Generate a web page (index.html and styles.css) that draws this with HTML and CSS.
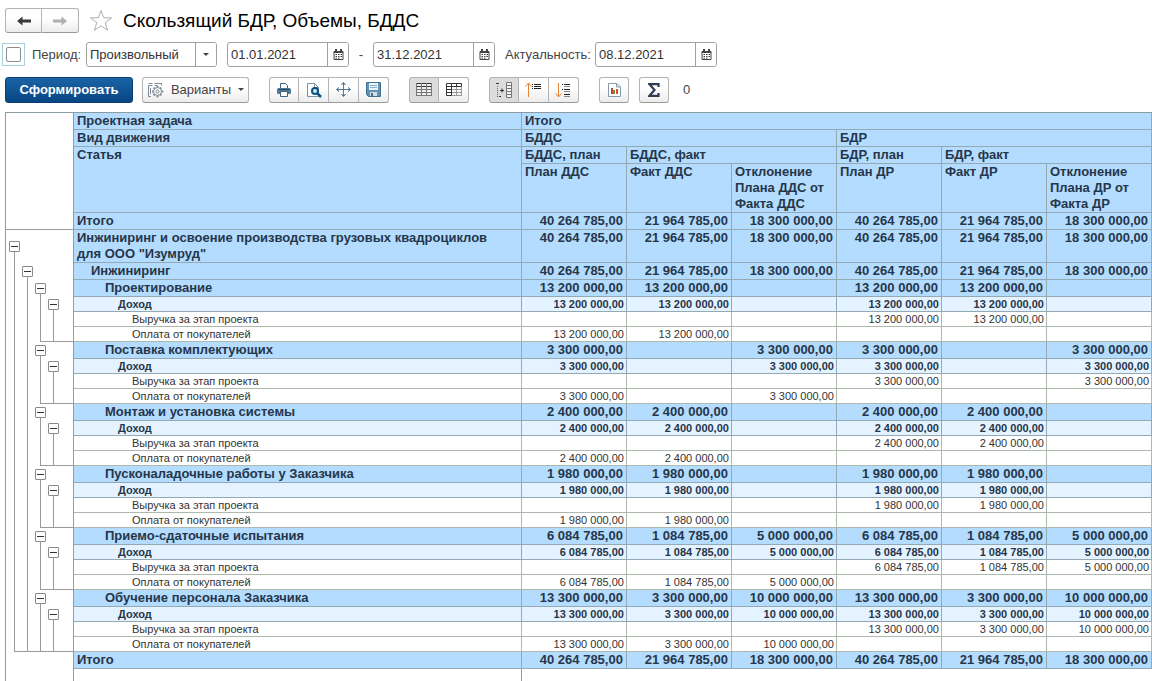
FILE: index.html
```html
<!DOCTYPE html>
<html lang="ru">
<head>
<meta charset="utf-8">
<title>Скользящий БДР, Объемы, БДДС</title>
<link rel="stylesheet" href="styles.css">
</head>
<body>
<svg class="defs" aria-hidden="true">
  <symbol id="cal" viewBox="0 0 11 12"><path d="M1 2.500h9v8H1z" fill="#fff" stroke="#444"/><path d="M1 2h9v2H1zM2 0h2v2H2zM7 0h2v2H7z" fill="#444"/><path d="M2.500 5.500h1.500M5 5.500h1.500M7.500 5.500h1.500M2.500 7.500h1.500M5 7.500h1.500M7.500 7.500h1.500M2.500 9.200h1.500M5 9.200h1.500" stroke="#444"/></symbol>
  <symbol id="down" viewBox="0 0 6 3"><path d="M0 0h6L3 3z" fill="#444"/></symbol>
</svg>
<header class="top">
  <div class="group nav">
    <button class="btn" aria-label="Назад"><svg width="16" height="10" viewBox="0 0 16 10"><path d="M1 5L6.500.500v3H15v3H6.500v3z" fill="#3a3a3a"/></svg></button>
    <button class="btn" aria-label="Вперед"><svg width="16" height="10" viewBox="0 0 16 10"><path d="M15 5L9.500.500v3H1v3h8.500v3z" fill="#b0b0b0"/></svg></button>
  </div>
  <svg class="star" width="24" height="23" viewBox="0 0 24 23"><path d="M12 1.500l2.600 7.200 8 .2-6.400 4.800 2.400 7.600L12 16.800l-6.600 4.500 2.400-7.600L1.400 8.900l8-.2z" fill="#fff" stroke="#aab0b5"/></svg>
  <h1>Скользящий БДР, Объемы, БДДС</h1>
</header>
<div class="filters">
  <label class="period"><span class="focus"><input type="checkbox" class="check"></span><span>Период:</span></label>
  <div class="field kind"><select aria-label="Вид периода"><option>Произвольный</option></select><span class="drop"><svg width="6" height="3"><use href="#down"/></svg></span></div>
  <div class="field"><input type="text" value="01.01.2021" aria-label="Начало периода"><button aria-label="Календарь"><svg width="11" height="12"><use href="#cal"/></svg></button></div>
  <span class="dash">-</span>
  <div class="field"><input type="text" value="31.12.2021" aria-label="Конец периода"><button aria-label="Календарь"><svg width="11" height="12"><use href="#cal"/></svg></button></div>
  <label class="actual" for="actual">Актуальность:</label>
  <div class="field"><input type="text" id="actual" value="08.12.2021"><button aria-label="Календарь"><svg width="11" height="12"><use href="#cal"/></svg></button></div>
</div>
<div class="toolbar">
  <button class="primary">Сформировать</button>
  <button class="btn variants"><svg width="17" height="16" viewBox="0 0 17 16"><g fill="none" stroke="#7d8a96"><path d="M4 14.500H1.500V3.500h4M1.500 1.500h4M7.500 1.500h7v2M7.500 3.500h3M3.500 6v6"/><circle cx="10.500" cy="9.500" r="4"/><circle cx="10.500" cy="9.500" r="1.500"/><path d="M10.500 4v1.500M10.500 13.500V15.500M5 9.500h1.500M14.500 9.500h1.800M6.600 5.600l1 1M13.400 12.400l1 1M6.600 13.400l1-1M13.400 6.600l1-1" stroke-width="2"/></g></svg><span>Варианты</span><svg width="6" height="3"><use href="#down"/></svg></button>
  <div class="group">
    <button class="btn" aria-label="Печать"><svg width="16" height="14" viewBox="0 0 16 14"><path d="M4.500 5V.500h5l2 2V5" fill="#fff" stroke="#44637c"/><rect x="1" y="5" width="14" height="6" rx="1.500" fill="#4f7894"/><path d="M3 6.500h10" stroke="#264a66"/><path d="M4.500 8.500h7v5h-7z" fill="#fff" stroke="#44637c"/></svg></button>
    <button class="btn" aria-label="Просмотр"><svg width="16" height="16" viewBox="0 0 16 16"><path d="M1.500 1.500h7l4 4v9h-11z" fill="#fff" stroke="#7895a8"/><path d="M8.500 1.500v4h4" fill="none" stroke="#7895a8"/><circle cx="9" cy="9" r="3" fill="#cfe6f5" stroke="#0e5280" stroke-width="2"/><path d="M11 11l4 4" stroke="#0e5280" stroke-width="2.500"/></svg></button>
    <button class="btn" aria-label="Параметры страницы"><svg width="15" height="15" viewBox="0 0 15 15"><path d="M7.500 1v13M1 7.500h13" stroke="#507b98"/><path d="M5.500 3l2-2.500 2 2.500M5.500 12l2 2.500 2-2.500M3 5.500L.500 7.500 3 9.500M12 5.500l2.500 2-2.500 2" fill="none" stroke="#356681"/></svg></button>
    <button class="btn" aria-label="Сохранить"><svg width="15" height="15" viewBox="0 0 15 15"><path d="M.500.500h14v14h-12l-2-2z" fill="#6392b5" stroke="#42708f"/><path d="M3 1h9v7H3z" fill="#e9f4fa"/><path d="M4 3.500h7M4 5.500h7" stroke="#8fb0c6"/><path d="M4 10h7v4H4z" fill="#d4e0e8"/><path d="M5 11h2v3H5z" fill="#42708f"/></svg></button>
  </div>
  <div class="group">
    <button class="btn on" aria-label="Таблица"><svg width="16" height="13" viewBox="0 0 16 13"><path d="M0 0h16v13H0z" fill="#eee"/><path d="M0 .500h16M0 3.500h16" stroke="#333"/><path d="M0 6.500h16M0 9.500h16M0 12.500h16" stroke="#777"/><path d="M.500 0v13M5.500 0v13M10.500 0v13M15.500 0v13" stroke="#777"/></svg></button>
    <button class="btn" aria-label="Заголовки"><svg width="16" height="13" viewBox="0 0 16 13"><path d="M.500.500h15v3H.500zM.500 3.500h5v9H.500z" fill="#fff" stroke="#333"/><path d="M5.500 0v4M10.500 0v4M0 6.500h5M0 9.500h5" stroke="#333"/><path d="M10.500 4v9M15.500 4v9M6 6.500h10M6 9.500h10M6 12.500h10" stroke="#999"/></svg></button>
  </div>
  <div class="group">
    <button class="btn on" aria-label="Группировки"><svg width="16" height="16" viewBox="0 0 16 16"><path d="M0 1.500h3M3 14.500h2M4 8.500h4M6 6.500v4" stroke="#333"/><path d="M1.500 4v11" stroke="#666" stroke-dasharray="1 1"/><path d="M10.500.500h5v15h-5zM11 3.500h5M11 6.500h5M11 9.500h5M11 12.500h5" fill="#f5f5f5" stroke="#777"/></svg></button>
    <button class="btn" aria-label="Свернуть"><svg width="17" height="16" viewBox="0 0 17 16"><path d="M3.500 15V2M.500 4.500l3-3.500 3 3.500" fill="none" stroke="#e0853a"/><path d="M7 2.500h1M9 2.500h7M7 4.500h1M9 4.500h7M7 6.500h1M9 6.500h7" stroke="#222"/></svg></button>
    <button class="btn" aria-label="Развернуть"><svg width="17" height="16" viewBox="0 0 17 16"><path d="M3.500 1v13M.500 11.500l3 3.500 3-3.500" fill="none" stroke="#e0853a"/><path d="M7 2.500h1M9 2.500h6M7 7.500h1M9 7.500h6M9 12.500h6" stroke="#222"/><path d="M9 4.500h6M9 9.500h6M9 14.500h6" stroke="#888"/></svg></button>
  </div>
  <button class="btn single" aria-label="Диаграмма"><svg width="13" height="14" viewBox="0 0 13 14"><path d="M.500.500h8l4 3.500v9.500H.500z" fill="#fff" stroke="#859ba9"/><path d="M8.500.500V4h4" fill="none" stroke="#859ba9"/><path d="M3 5h2v6H3z" fill="#c8452d"/><path d="M5 7h2v4H5z" fill="#5d9a43"/><path d="M8 6h2v5H8z" fill="#d0532d"/></svg></button>
  <button class="btn single" aria-label="Сумма"><svg width="12" height="14" viewBox="0 0 12 14"><path d="M10.500 4V1.200H1.500L6.500 7l-5 5.800h9V10" fill="none" stroke="#2c3e50" stroke-width="2.200"/></svg></button>
  <output class="sum">0</output>
</div>
<table class="report">
  <colgroup><col class="c-tree"><col><col class="c-num"><col class="c-num"><col class="c-num"><col class="c-num"><col class="c-num"><col class="c-num"></colgroup>
  <thead>
    <tr><td class="tree corner" rowspan="5"></td><th>Проектная задача</th><th colspan="6">Итого</th></tr>
    <tr><th>Вид движения</th><th colspan="3">БДДС</th><th colspan="3">БДР</th></tr>
    <tr><th rowspan="2">Статья</th><th>БДДС, план</th><th colspan="2">БДДС, факт</th><th>БДР, план</th><th colspan="2">БДР, факт</th></tr>
    <tr><th>План ДДС</th><th>Факт ДДС</th><th>Отклонение Плана ДДС от Факта ДДС</th><th>План ДР</th><th>Факт ДР</th><th>Отклонение Плана ДР от Факта ДР</th></tr>
    <tr class="total"><th>Итого</th><td>40 264 785,00</td><td>21 964 785,00</td><td>18 300 000,00</td><td>40 264 785,00</td><td>21 964 785,00</td><td>18 300 000,00</td></tr>
  </thead>
  <tbody>
    <tr class="l0"><td class="tree"><div><i class="t"><button aria-label="Свернуть"></button></i></div></td><th>Инжиниринг и освоение производства грузовых квадроциклов для&nbsp;ООО "Изумруд"</th><td>40 264 785,00</td><td>21 964 785,00</td><td>18 300 000,00</td><td>40 264 785,00</td><td>21 964 785,00</td><td>18 300 000,00</td></tr>
    <tr class="l1"><td class="tree"><div><i></i><i class="t"><button aria-label="Свернуть"></button></i></div></td><th>Инжиниринг</th><td>40 264 785,00</td><td>21 964 785,00</td><td>18 300 000,00</td><td>40 264 785,00</td><td>21 964 785,00</td><td>18 300 000,00</td></tr>

    <tr class="l2"><td class="tree"><div><i></i><i></i><i class="t"><button aria-label="Свернуть"></button></i></div></td><th>Проектирование</th><td>13 200 000,00</td><td>13 200 000,00</td><td></td><td>13 200 000,00</td><td>13 200 000,00</td><td></td></tr>
    <tr class="l3"><td class="tree"><div><i></i><i></i><i></i><i class="t"><button aria-label="Свернуть"></button></i></div></td><th>Доход</th><td>13 200 000,00</td><td>13 200 000,00</td><td></td><td>13 200 000,00</td><td>13 200 000,00</td><td></td></tr>
    <tr class="l4"><td class="tree"><div><i></i><i></i><i></i><i></i></div></td><th>Выручка за этап проекта</th><td></td><td></td><td></td><td>13 200 000,00</td><td>13 200 000,00</td><td></td></tr>
    <tr class="l4"><td class="tree"><div><i></i><i></i><i class="e"></i><i class="e"></i></div></td><th>Оплата от покупателей</th><td>13 200 000,00</td><td>13 200 000,00</td><td></td><td></td><td></td><td></td></tr>

    <tr class="l2"><td class="tree"><div><i></i><i></i><i class="t"><button aria-label="Свернуть"></button></i></div></td><th>Поставка комплектующих</th><td>3 300 000,00</td><td></td><td>3 300 000,00</td><td>3 300 000,00</td><td></td><td>3 300 000,00</td></tr>
    <tr class="l3"><td class="tree"><div><i></i><i></i><i></i><i class="t"><button aria-label="Свернуть"></button></i></div></td><th>Доход</th><td>3 300 000,00</td><td></td><td>3 300 000,00</td><td>3 300 000,00</td><td></td><td>3 300 000,00</td></tr>
    <tr class="l4"><td class="tree"><div><i></i><i></i><i></i><i></i></div></td><th>Выручка за этап проекта</th><td></td><td></td><td></td><td>3 300 000,00</td><td></td><td>3 300 000,00</td></tr>
    <tr class="l4"><td class="tree"><div><i></i><i></i><i class="e"></i><i class="e"></i></div></td><th>Оплата от покупателей</th><td>3 300 000,00</td><td></td><td>3 300 000,00</td><td></td><td></td><td></td></tr>

    <tr class="l2"><td class="tree"><div><i></i><i></i><i class="t"><button aria-label="Свернуть"></button></i></div></td><th>Монтаж и установка системы</th><td>2 400 000,00</td><td>2 400 000,00</td><td></td><td>2 400 000,00</td><td>2 400 000,00</td><td></td></tr>
    <tr class="l3"><td class="tree"><div><i></i><i></i><i></i><i class="t"><button aria-label="Свернуть"></button></i></div></td><th>Доход</th><td>2 400 000,00</td><td>2 400 000,00</td><td></td><td>2 400 000,00</td><td>2 400 000,00</td><td></td></tr>
    <tr class="l4"><td class="tree"><div><i></i><i></i><i></i><i></i></div></td><th>Выручка за этап проекта</th><td></td><td></td><td></td><td>2 400 000,00</td><td>2 400 000,00</td><td></td></tr>
    <tr class="l4"><td class="tree"><div><i></i><i></i><i class="e"></i><i class="e"></i></div></td><th>Оплата от покупателей</th><td>2 400 000,00</td><td>2 400 000,00</td><td></td><td></td><td></td><td></td></tr>

    <tr class="l2"><td class="tree"><div><i></i><i></i><i class="t"><button aria-label="Свернуть"></button></i></div></td><th>Пусконаладочные работы у Заказчика</th><td>1 980 000,00</td><td>1 980 000,00</td><td></td><td>1 980 000,00</td><td>1 980 000,00</td><td></td></tr>
    <tr class="l3"><td class="tree"><div><i></i><i></i><i></i><i class="t"><button aria-label="Свернуть"></button></i></div></td><th>Доход</th><td>1 980 000,00</td><td>1 980 000,00</td><td></td><td>1 980 000,00</td><td>1 980 000,00</td><td></td></tr>
    <tr class="l4"><td class="tree"><div><i></i><i></i><i></i><i></i></div></td><th>Выручка за этап проекта</th><td></td><td></td><td></td><td>1 980 000,00</td><td>1 980 000,00</td><td></td></tr>
    <tr class="l4"><td class="tree"><div><i></i><i></i><i class="e"></i><i class="e"></i></div></td><th>Оплата от покупателей</th><td>1 980 000,00</td><td>1 980 000,00</td><td></td><td></td><td></td><td></td></tr>

    <tr class="l2"><td class="tree"><div><i></i><i></i><i class="t"><button aria-label="Свернуть"></button></i></div></td><th>Приемо-сдаточные испытания</th><td>6 084 785,00</td><td>1 084 785,00</td><td>5 000 000,00</td><td>6 084 785,00</td><td>1 084 785,00</td><td>5 000 000,00</td></tr>
    <tr class="l3"><td class="tree"><div><i></i><i></i><i></i><i class="t"><button aria-label="Свернуть"></button></i></div></td><th>Доход</th><td>6 084 785,00</td><td>1 084 785,00</td><td>5 000 000,00</td><td>6 084 785,00</td><td>1 084 785,00</td><td>5 000 000,00</td></tr>
    <tr class="l4"><td class="tree"><div><i></i><i></i><i></i><i></i></div></td><th>Выручка за этап проекта</th><td></td><td></td><td></td><td>6 084 785,00</td><td>1 084 785,00</td><td>5 000 000,00</td></tr>
    <tr class="l4"><td class="tree"><div><i></i><i></i><i class="e"></i><i class="e"></i></div></td><th>Оплата от покупателей</th><td>6 084 785,00</td><td>1 084 785,00</td><td>5 000 000,00</td><td></td><td></td><td></td></tr>

    <tr class="l2"><td class="tree"><div><i></i><i></i><i class="t"><button aria-label="Свернуть"></button></i></div></td><th>Обучение персонала Заказчика</th><td>13 300 000,00</td><td>3 300 000,00</td><td>10 000 000,00</td><td>13 300 000,00</td><td>3 300 000,00</td><td>10 000 000,00</td></tr>
    <tr class="l3"><td class="tree"><div><i></i><i></i><i></i><i class="t"><button aria-label="Свернуть"></button></i></div></td><th>Доход</th><td>13 300 000,00</td><td>3 300 000,00</td><td>10 000 000,00</td><td>13 300 000,00</td><td>3 300 000,00</td><td>10 000 000,00</td></tr>
    <tr class="l4"><td class="tree"><div><i></i><i></i><i></i><i></i></div></td><th>Выручка за этап проекта</th><td></td><td></td><td></td><td>13 300 000,00</td><td>3 300 000,00</td><td>10 000 000,00</td></tr>
    <tr class="l4"><td class="tree"><div><i class="e"></i><i class="e"></i><i class="e"></i><i class="e"></i></div></td><th>Оплата от покупателей</th><td>13 300 000,00</td><td>3 300 000,00</td><td>10 000 000,00</td><td></td><td></td><td></td></tr>
  </tbody>
  <tfoot>
    <tr class="total"><td class="tree"></td><th>Итого</th><td>40 264 785,00</td><td>21 964 785,00</td><td>18 300 000,00</td><td>40 264 785,00</td><td>21 964 785,00</td><td>18 300 000,00</td></tr>
    <tr class="tail"><td class="tree"></td><td></td><td colspan="6"></td></tr>
  </tfoot>
</table>
</body>
</html>
```

FILE: styles.css
```css
* { box-sizing: border-box; }

body {
  margin: 0;
  padding: 8px 0 0 5px;
  background: #fff;
  color: #444;
  font: 13px/16px "Liberation Sans", Arial, sans-serif;
}

button, input, select { font: inherit; color: inherit; }
button { cursor: pointer; }
svg { display: block; flex: none; }
.defs { position: absolute; width: 0; height: 0; }

/* title bar */
.top { display: flex; align-items: center; height: 25px; }
.star { margin: 0 10px; }
h1 { margin: 0; font-size: 19px; line-height: 24px; font-weight: 400; color: #000; }

/* buttons */
.btn {
  display: flex;
  align-items: center;
  justify-content: center;
  padding: 0;
  border: 1px solid #b4b4b4;
  border-bottom-color: #999;
  border-radius: 3px;
  background: linear-gradient(#fff 40%, #ececec);
}
.btn.on { background: #dcdcdc; }
.group { display: flex; }
.group .btn { width: 30px; height: 26px; }
.group .btn + .btn { border-left: 0; border-radius: 0 3px 3px 0; }
.group .btn:not(:last-child) { border-top-right-radius: 0; border-bottom-right-radius: 0; }
.nav .btn { width: 37px; height: 25px; }

/* filters */
.filters { display: flex; align-items: center; height: 25px; margin-top: 9px; }
.period { display: flex; align-items: center; width: 81px; }
.focus {
  display: flex;
  margin: 0 7px 0 -3px;
  padding: 3px;
  border: 1px solid #a9cfdf;
}
.check {
  appearance: none;
  width: 15px;
  height: 15px;
  margin: 0;
  border: 1px solid #8d8d8d;
  border-radius: 2px;
}
.field {
  display: flex;
  width: 122px;
  height: 25px;
  border: 1px solid #a0a0a0;
  border-radius: 3px;
  background: #fff;
  overflow: hidden;
  color: #333;
}
.field.kind { width: 131px; margin-right: 10px; }
.field input, .field select {
  appearance: none;
  flex: 1;
  min-width: 0;
  border: 0;
  padding: 0 3px;
  background: none;
  outline: 0;
}
.field button, .drop {
  display: flex;
  align-items: center;
  justify-content: center;
  width: 21px;
  padding: 0;
  border: 0;
  border-left: 1px solid #a0a0a0;
  background: #fff;
}
.dash { width: 24px; text-align: center; }
.actual { width: 100px; padding-left: 10px; }

/* command bar */
.toolbar { display: flex; align-items: center; height: 27px; margin: 9px 0; }
.primary {
  width: 128px;
  height: 26px;
  margin-right: 9px;
  padding: 0;
  border: 1px solid #0b3f73;
  border-radius: 3px;
  background: linear-gradient(#1b64a5, #074683);
  color: #fff;
  font-weight: 700;
}
.variants { width: 107px; height: 26px; gap: 7px; margin-right: 20px; }
.toolbar .group { margin-right: 20px; }
.single { width: 30px; height: 26px; margin-right: 10px; }
.sum { margin-left: 4px; }

/* report */
.report {
  width: 100%;
  table-layout: fixed;
  border-collapse: separate;
  border-spacing: 0;
  border-top: 1px solid #8b9ba3;
  color: #26364a;
}
.c-tree { width: 69px; }
.c-num { width: 105px; }
.report th, .report td {
  padding: 0 3px;
  border: solid #93a9b4;
  border-width: 0 1px 1px 0;
  vertical-align: top;
  font-weight: 700;
  background: #b3dcff;
}
.report th { text-align: left; }
.report td { height: 17px; text-align: right; white-space: nowrap; }
.report .l0 td { height: 33px; }
.report .l1 th { padding-left: 17px; }
.report .l2 th { padding-left: 31px; }
.report .l3 th, .report .l3 td { background: #e4f3ff; }
.report .l3 th, .report .l4 th { padding-left: 44px; }
.report .l4 th { padding-left: 58px; }
.report .l3 th, .report .l3 td, .report .l4 th, .report .l4 td {
  height: 15px;
  padding-right: 2px;
  font-size: 11px;
  line-height: 14px;
}
.report .l4 th, .report .l4 td {
  border-color: #adb9ad;
  background: #fff;
  color: #333;
  font-weight: 400;
}

/* grouping gutter */
.report tr .tree {
  padding: 0 0 0 8px;
  border: solid #9a9a9a;
  border-width: 0 1px;
  background: #fff;
}
.report tr .corner { border-bottom-width: 1px; }
.tree div { display: flex; height: 100%; }
.tree i { width: 13px; border-left: 1px solid #9a9a9a; }
.tree i:nth-child(4) { flex: 1; }
.tree .e { border-bottom: 1px solid #9a9a9a; }
.tree .t { margin-top: 3px; }
.l0 .tree .t { margin-top: 11px; }
.l3 .tree .t { margin-top: 2px; }
.tree button {
  display: block;
  width: 11px;
  height: 11px;
  margin-left: -6px;
  padding: 0;
  border: 1px solid #8a8a8a;
  border-radius: 1px;
  background: linear-gradient(#333, #333) center / 7px 1px no-repeat #fff;
}
.report .tail td { height: 12px; border-bottom: 0; border-color: #9a9a9a; background: #fff; }
.report .tail td:last-child { border-right: 0; }
```
